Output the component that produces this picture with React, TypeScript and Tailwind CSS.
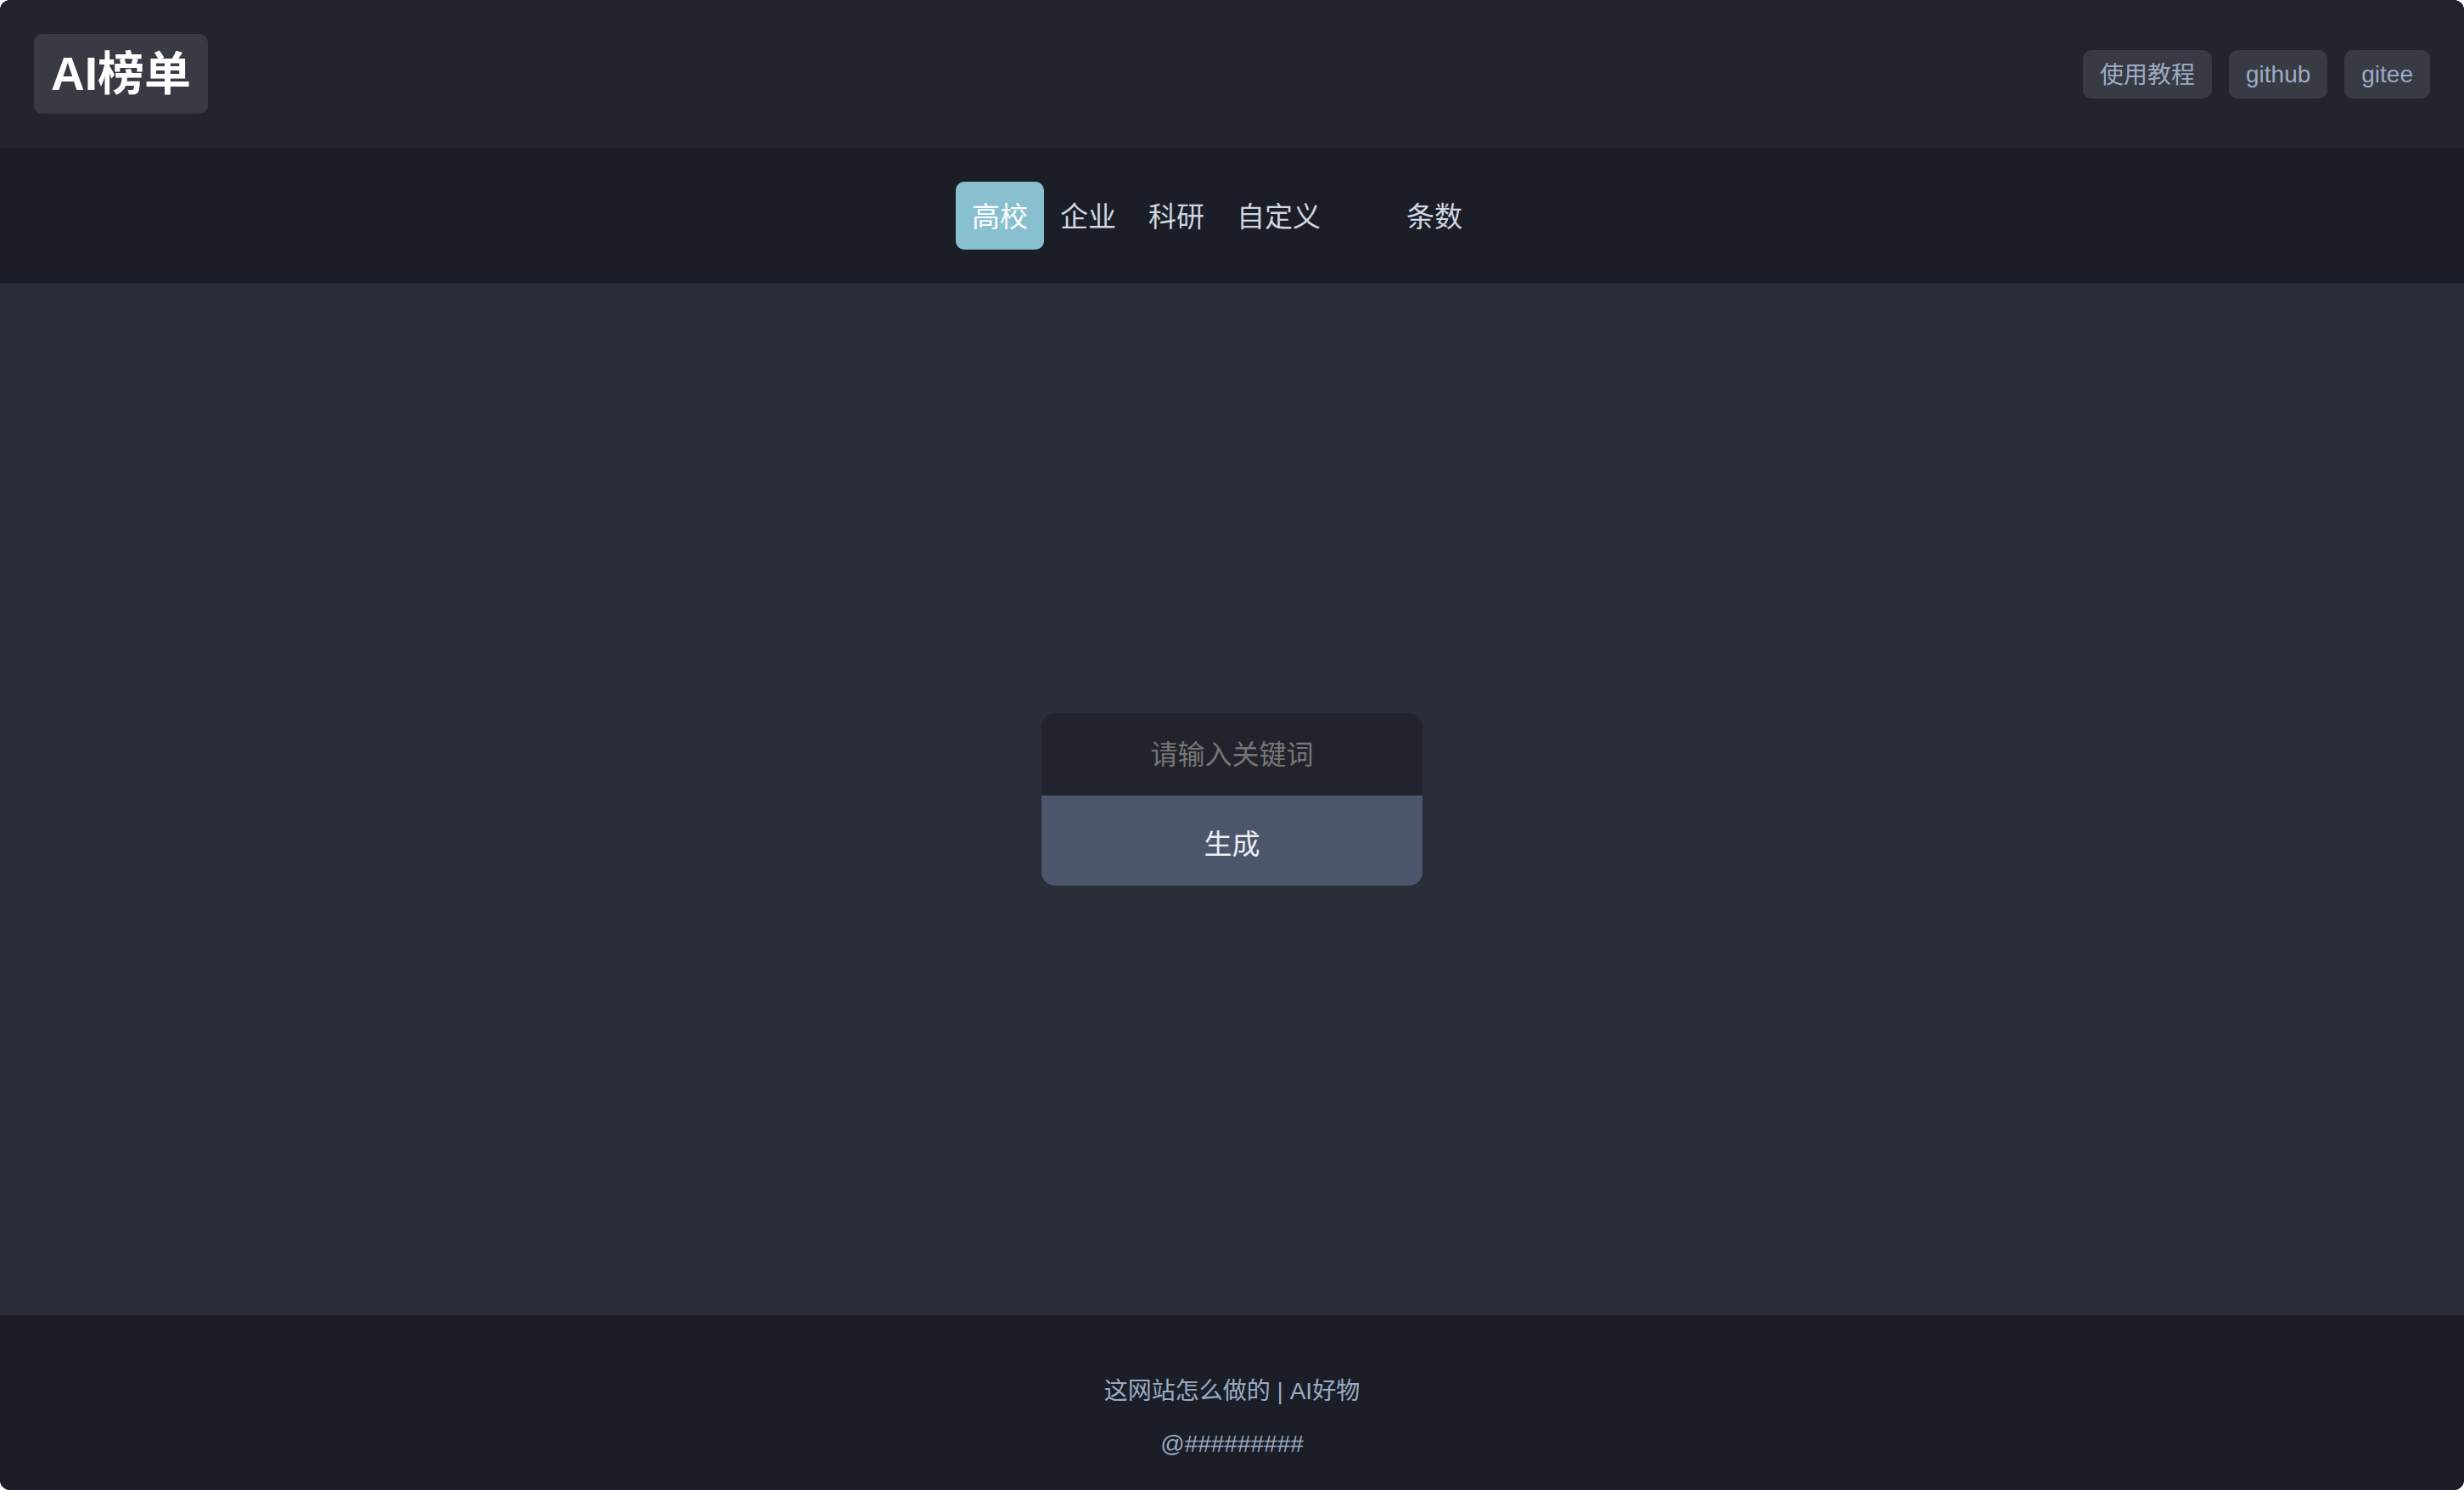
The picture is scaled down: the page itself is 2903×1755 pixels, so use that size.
import React from 'react';

const tabs = ['高校', '企业', '科研', '自定义'];

const App = () => {
  return (
    <div className="bg-white">
      <div className="flex flex-col h-[1755px] rounded-[12px] overflow-hidden bg-[#2a2e38] font-['Liberation_Sans','Noto_Sans_CJK_SC',sans-serif]">
        {/* header */}
        <header className="flex items-center justify-between h-[174px] px-[40px] bg-[#22252e] shrink-0">
          <div className="flex items-center h-[94px] px-[20px] rounded-[10px] bg-[#383a44] text-white text-[55px] font-bold">
            AI榜单
          </div>
          <div className="flex items-center gap-[20px]">
            <a className="flex items-center h-[57px] px-[20px] pt-[3px] rounded-[10px] bg-[#383a44] text-[#9cacc4] text-[28px]">使用教程</a>
            <a className="flex items-center h-[57px] px-[20px] pt-[2px] rounded-[10px] bg-[#383a44] text-[#9cacc4] text-[28px]">github</a>
            <a className="flex items-center h-[57px] px-[20px] pt-[2px] rounded-[10px] bg-[#383a44] text-[#9cacc4] text-[28px]">gitee</a>
          </div>
        </header>

        {/* tabs */}
        <nav className="flex items-center justify-center h-[160px] bg-[#1b1e26] shrink-0">
          {tabs.map((t, i) => (
            <button
              key={t}
              className={
                i === 0
                  ? 'flex items-center h-[80px] px-[19px] pt-[3px] rounded-[10px] bg-[#88c0d0] text-white text-[33px]'
                  : 'flex items-center h-[80px] px-[19px] pt-[3px] rounded-[10px] text-[#d0d6e0] text-[33px]'
              }
            >
              {t}
            </button>
          ))}
          <span className="ml-[82px] pt-[3px] text-[#d0d6e0] text-[33px]">条数</span>
          <input className="w-[54px] h-[60px] bg-transparent outline-none border-0" />
        </nav>

        {/* main */}
        <main className="flex flex-1 items-center justify-center">
          <div className="flex flex-col w-[449px] rounded-[16px] overflow-hidden">
            <input
              placeholder="请输入关键词"
              className="h-[97px] pt-[2px] bg-[#21242d] text-center text-[32px] text-[#d8dee9] placeholder:text-[#767676] outline-none"
            />
            <button className="h-[106px] pt-[10px] bg-[#4c566a] text-[#eceff4] text-[33px]">生成</button>
          </div>
        </main>

        {/* footer */}
        <footer className="flex flex-col items-center h-[206px] pt-[70px] gap-[22px] bg-[#1b1e26] text-[#9aabc4] text-[28px] leading-[40px] shrink-0">
          <div>
            <a>这网站怎么做的</a> | <a>AI好物</a>
          </div>
          <div>@#########</div>
        </footer>
      </div>
    </div>
  );
};

export default App;
